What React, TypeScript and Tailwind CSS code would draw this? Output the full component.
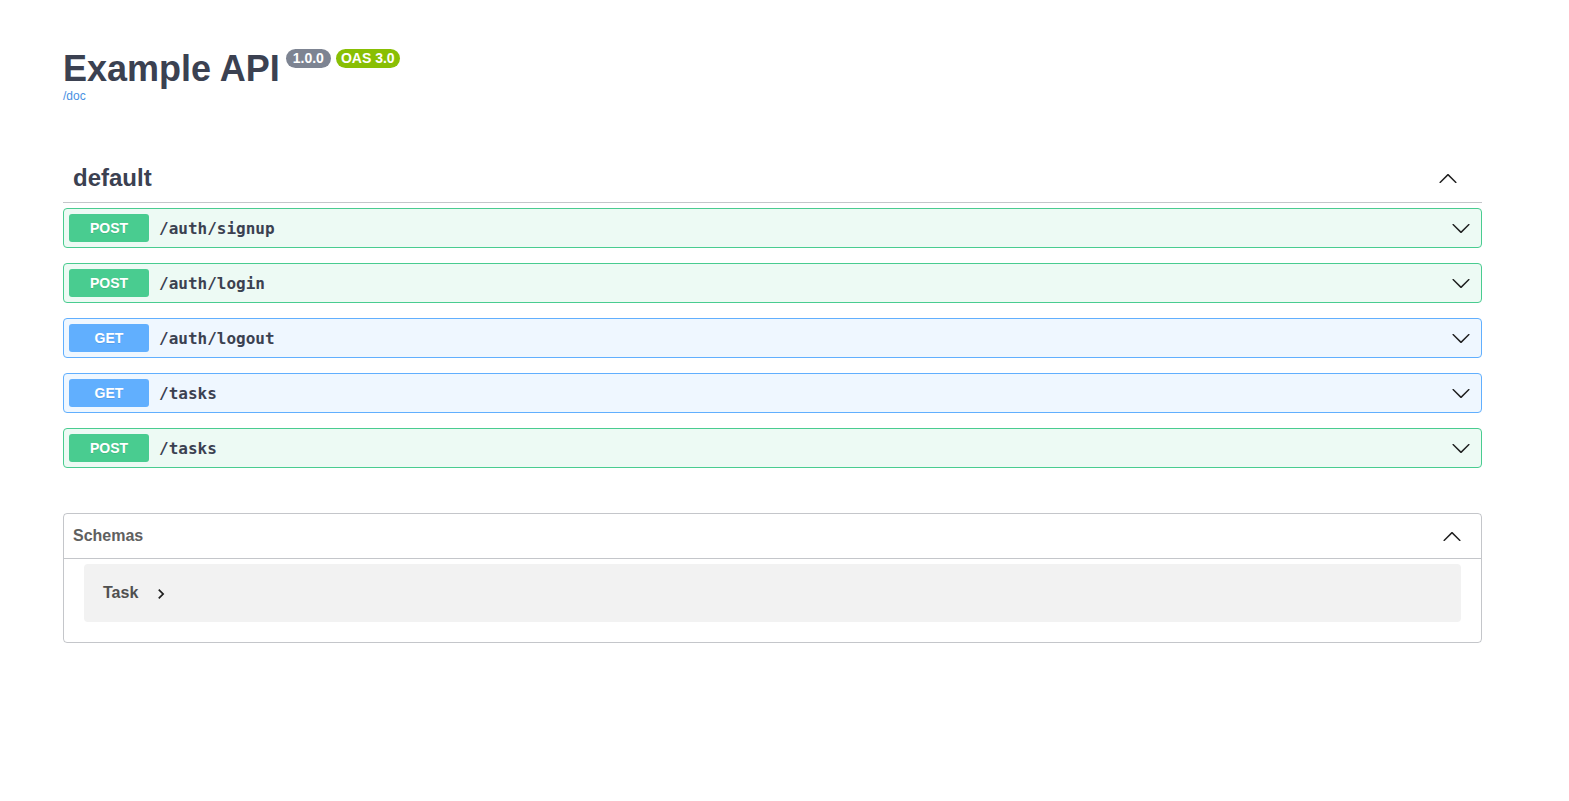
type Op = { method: "POST" | "GET"; path: string };

const ops: Op[] = [
  { method: "POST", path: "/auth/signup" },
  { method: "POST", path: "/auth/login" },
  { method: "GET", path: "/auth/logout" },
  { method: "GET", path: "/tasks" },
  { method: "POST", path: "/tasks" },
];

function ArrowDown() {
  return (
    <svg width="20" height="20" viewBox="0 0 20 20" className="shrink-0 fill-[#1f1f1f]" aria-hidden="true">
      <path d="M17.418 6.109c.272-.268.709-.268.979 0s.271.701 0 .969l-7.908 7.83c-.27.268-.707.268-.979 0l-7.908-7.83c-.27-.268-.27-.701 0-.969.271-.268.709-.268.979 0L10 13.25l7.418-7.141z" />
    </svg>
  );
}

function ArrowUp() {
  return (
    <svg width="20" height="20" viewBox="0 0 20 20" className="shrink-0 fill-[#1f1f1f]" aria-hidden="true">
      <path d="M17.418 14.908c.272.268.709.268.979 0s.271-.701 0-.969l-7.908-7.83c-.27-.268-.707-.268-.979 0l-7.908 7.83c-.27.268-.27.701 0 .969.271.268.709.268.979 0L10 7.767l7.418 7.141z" />
    </svg>
  );
}

function OpRow({ op }: { op: Op }) {
  const post = op.method === "POST";
  return (
    <div
      className={
        post
          ? "mb-[15px] flex items-center rounded-[4px] border border-[#49cc90] bg-[#edfaf4] p-[5px]"
          : "mb-[15px] flex items-center rounded-[4px] border border-[#61affe] bg-[#eff7ff] p-[5px]"
      }
    >
      <span
        className={
          post
            ? "flex h-[28px] w-[80px] shrink-0 items-center justify-center rounded-[3px] bg-[#49cc90] text-[14px] font-bold text-white [text-shadow:0_1px_0_rgba(0,0,0,0.1)]"
            : "flex h-[28px] w-[80px] shrink-0 items-center justify-center rounded-[3px] bg-[#61affe] text-[14px] font-bold text-white [text-shadow:0_1px_0_rgba(0,0,0,0.1)]"
        }
      >
        {op.method}
      </span>
      <span className="flex-1 px-[10px] pt-[1px] font-['DejaVu_Sans_Mono',monospace] text-[16px] font-semibold text-[#3b4151]">
        {op.path}
      </span>
      <span className="mr-[5px]">
        <ArrowDown />
      </span>
    </div>
  );
}

export default function App() {
  return (
    <div className="min-h-screen bg-white font-['Liberation_Sans',Arial,sans-serif]">
      <div className="ml-[63px] w-[1419px] pt-[49px]">
        <div className="flex items-start">
          <h2 className="mt-[2px] text-[36px] leading-[36px] font-bold text-[#3b4151]">Example API</h2>
          <span className="ml-[6px] h-[19px] rounded-full bg-[#7d8492] px-[7px] text-[14px] leading-[19px] font-bold text-white">
            1.0.0
          </span>
          <span className="ml-[5px] h-[19px] rounded-full bg-[#89bf04] px-[5px] text-[14px] leading-[19px] font-bold text-white">
            OAS 3.0
          </span>
        </div>
        <a className="mt-[2px] block text-[12px] leading-[14px] text-[#4990e2]">/doc</a>

        <div className="mt-[50px]">
          <div className="mb-[5px] flex items-center border-b border-[rgba(59,65,81,0.3)] py-[10px] pr-[24px] pl-[10px]">
            <h3 className="flex-1 text-[24px] leading-[29px] font-bold text-[#3b4151]">default</h3>
            <ArrowUp />
          </div>
          {ops.map((op, i) => (
            <OpRow key={i} op={op} />
          ))}
        </div>

        <section className="mt-[45px] rounded-[4px] border border-[rgba(59,65,81,0.3)]">
          <div className="flex items-center border-b border-[rgba(59,65,81,0.3)] py-[10px] pr-[19px] pl-[9px]">
            <h4 className="flex-1 text-[16px] leading-[24px] font-bold text-[#606060]">Schemas</h4>
            <ArrowUp />
          </div>
          <div className="mx-[20px] mt-[5px] mb-[20px] flex h-[58px] items-center rounded-[4px] bg-[#f2f2f2] pl-[19px]">
            <span className="text-[16px] font-bold text-[#505050]">Task</span>
            <svg width="20" height="20" viewBox="0 0 24 24" className="ml-[13px] mt-[2px] fill-[#1f1f1f]" aria-hidden="true">
              <path d="M10 6L8.59 7.41 13.17 12l-4.58 4.59L10 18l6-6z" />
            </svg>
          </div>
        </section>
      </div>
    </div>
  );
}
